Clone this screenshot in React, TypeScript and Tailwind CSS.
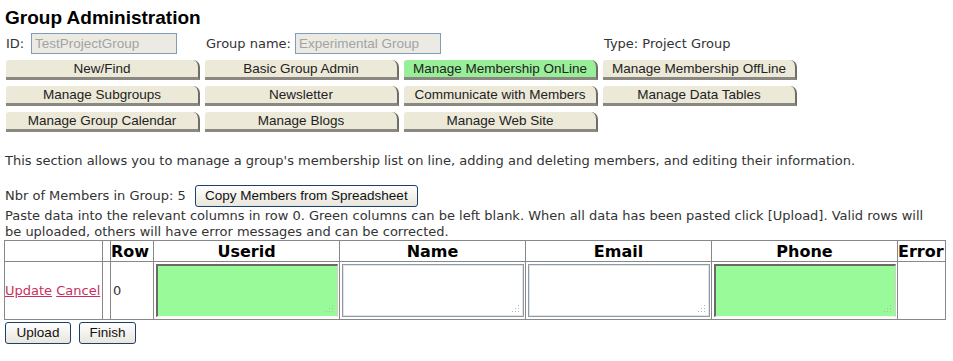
import type { ReactNode } from "react";

const tabs: { label: string; active?: boolean }[][] = [
  [
    { label: "New/Find" },
    { label: "Basic Group Admin" },
    { label: "Manage Membership OnLine", active: true },
    { label: "Manage Membership OffLine" },
  ],
  [
    { label: "Manage Subgroups" },
    { label: "Newsletter" },
    { label: "Communicate with Members" },
    { label: "Manage Data Tables" },
  ],
  [
    { label: "Manage Group Calendar" },
    { label: "Manage Blogs" },
    { label: "Manage Web Site" },
  ],
];

const verdana = "font-['DejaVu_Sans',Verdana,sans-serif]";
const arial = "font-['Liberation_Sans',Arial,sans-serif]";

function TabButton({ label, active }: { label: string; active?: boolean }) {
  return (
    <button
      type="button"
      className={`h-[20px] w-[194px] rounded-tl-[3px] rounded-tr-[7px] border-r-[2px] border-b-[3px] border-r-[#6f6d66] border-b-[#8a8880] text-center text-[13.5px] leading-[18px] text-[#222] ${arial} ${
        active ? "bg-[#98ef98]" : "bg-[#ece9d8]"
      }`}
    >
      {label}
    </button>
  );
}

function XpButton({ children, className = "" }: { children: ReactNode; className?: string }) {
  return (
    <button
      type="button"
      className={`h-[22px] rounded-[3px] border border-[#1c3f6e] bg-gradient-to-b from-[#fefefe] to-[#e8e6dc] px-[8px] text-[13.5px] leading-[20px] text-[#111] ${arial} ${className}`}
    >
      {children}
    </button>
  );
}

function Grip() {
  return (
    <svg className="absolute right-[3px] bottom-[3px]" width="8" height="8" viewBox="0 0 8 8">
      <rect x="6" y="0" width="1" height="1" fill="#b8b8b0" />
      <rect x="3" y="3" width="1" height="1" fill="#b8b8b0" />
      <rect x="6" y="3" width="1" height="1" fill="#b8b8b0" />
      <rect x="0" y="6" width="1" height="1" fill="#b8b8b0" />
      <rect x="3" y="6" width="1" height="1" fill="#b8b8b0" />
      <rect x="6" y="6" width="1" height="1" fill="#b8b8b0" />
    </svg>
  );
}

function Area({ green }: { green?: boolean }) {
  return (
    <div
      className={`relative mx-auto h-[53px] w-[182px] ${
        green
          ? "border-t-[2px] border-l-[2px] border-t-[#6a6a6a] border-l-[#6a6a6a] border-r border-b border-r-[#d4d0c8] border-b-[#f4f4f4] bg-[#98fa98]"
          : "border border-[#8f9aa5] bg-white shadow-[inset_0_0_0_1px_#dfe4e8]"
      }`}
    >
      <Grip />
    </div>
  );
}

export default function App() {
  return (
    <div className={`min-h-[361px] bg-white pl-[5px] text-[#333] ${verdana}`}>
      <h1 className={`pt-[7px] text-[19px] leading-[21px] font-bold text-black ${arial}`}>
        Group Administration
      </h1>

      <div className="mt-[5px] flex h-[21px] items-center text-[13px]">
        <span className="w-[26px] pl-[1px]">ID:</span>
        <input
          disabled
          value="TestProjectGroup"
          className={`h-[21px] w-[146px] border border-[#7f9db9] bg-[#ebebe4] px-[3px] text-[13.5px] text-[#a3a3a3] ${arial}`}
        />
        <span className="ml-[29px] w-[89px]">Group name:</span>
        <input
          disabled
          value="Experimental Group"
          className={`h-[21px] w-[146px] border border-[#7f9db9] bg-[#ebebe4] px-[3px] text-[13.5px] text-[#a3a3a3] ${arial}`}
        />
        <span className="ml-[163px]">Type: Project Group</span>
      </div>

      <div className="mt-[6px] flex flex-col gap-[6px] pl-[1px]">
        {tabs.map((row, i) => (
          <div key={i} className="flex gap-[5px]">
            {row.map((t) => (
              <TabButton key={t.label} label={t.label} active={t.active} />
            ))}
          </div>
        ))}
      </div>

      <p className="mt-[21px] text-[13px] leading-[16px]">
        This section allows you to manage a group's membership list on line, adding and deleting
        members, and editing their information.
      </p>

      <div className="mt-[16px] flex h-[22px] items-center text-[13px]">
        <span>Nbr of Members in Group: 5</span>
        <XpButton className="ml-[9px] w-[223px]">Copy Members from Spreadsheet</XpButton>
      </div>

      <p className="mt-[1px] pr-[12px] text-[13px] leading-[16px]">
        Paste data into the relevant columns in row 0. Green columns can be left blank. When all
        data has been pasted click [Upload]. Valid rows will be uploaded, others will have error
        messages and can be corrected.
      </p>

      <table className="-ml-[1px] w-[942px] border-collapse border border-[#888]">
        <thead>
          <tr className="h-[21px] text-[16px] leading-[19px] font-bold text-black">
            <th className="w-[98px] border border-[#888]"></th>
            <th className="w-[8px] border border-[#888]"></th>
            <th className="w-[43px] border border-[#888] text-left">Row</th>
            <th className="w-[186px] border border-[#888]">Userid</th>
            <th className="w-[186px] border border-[#888]">Name</th>
            <th className="w-[186px] border border-[#888]">Email</th>
            <th className="w-[186px] border border-[#888]">Phone</th>
            <th className="border border-[#888] text-left">Error</th>
          </tr>
        </thead>
        <tbody>
          <tr className="h-[58px] text-[13px]">
            <td className="border border-[#888] px-0 text-[#c8305c]">
              <a href="#" className="underline">Update</a>{" "}
              <a href="#" className="underline">Cancel</a>
            </td>
            <td className="border border-[#888]"></td>
            <td className="border border-[#888] pl-[2px]">0</td>
            <td className="border border-[#888]"><Area green /></td>
            <td className="border border-[#888]"><Area /></td>
            <td className="border border-[#888]"><Area /></td>
            <td className="border border-[#888]"><Area green /></td>
            <td className="border border-[#888]"></td>
          </tr>
        </tbody>
      </table>

      <div className="mt-[2px] flex gap-[8px]">
        <XpButton className="w-[66px]">Upload</XpButton>
        <XpButton className="w-[57px]">Finish</XpButton>
      </div>
    </div>
  );
}
